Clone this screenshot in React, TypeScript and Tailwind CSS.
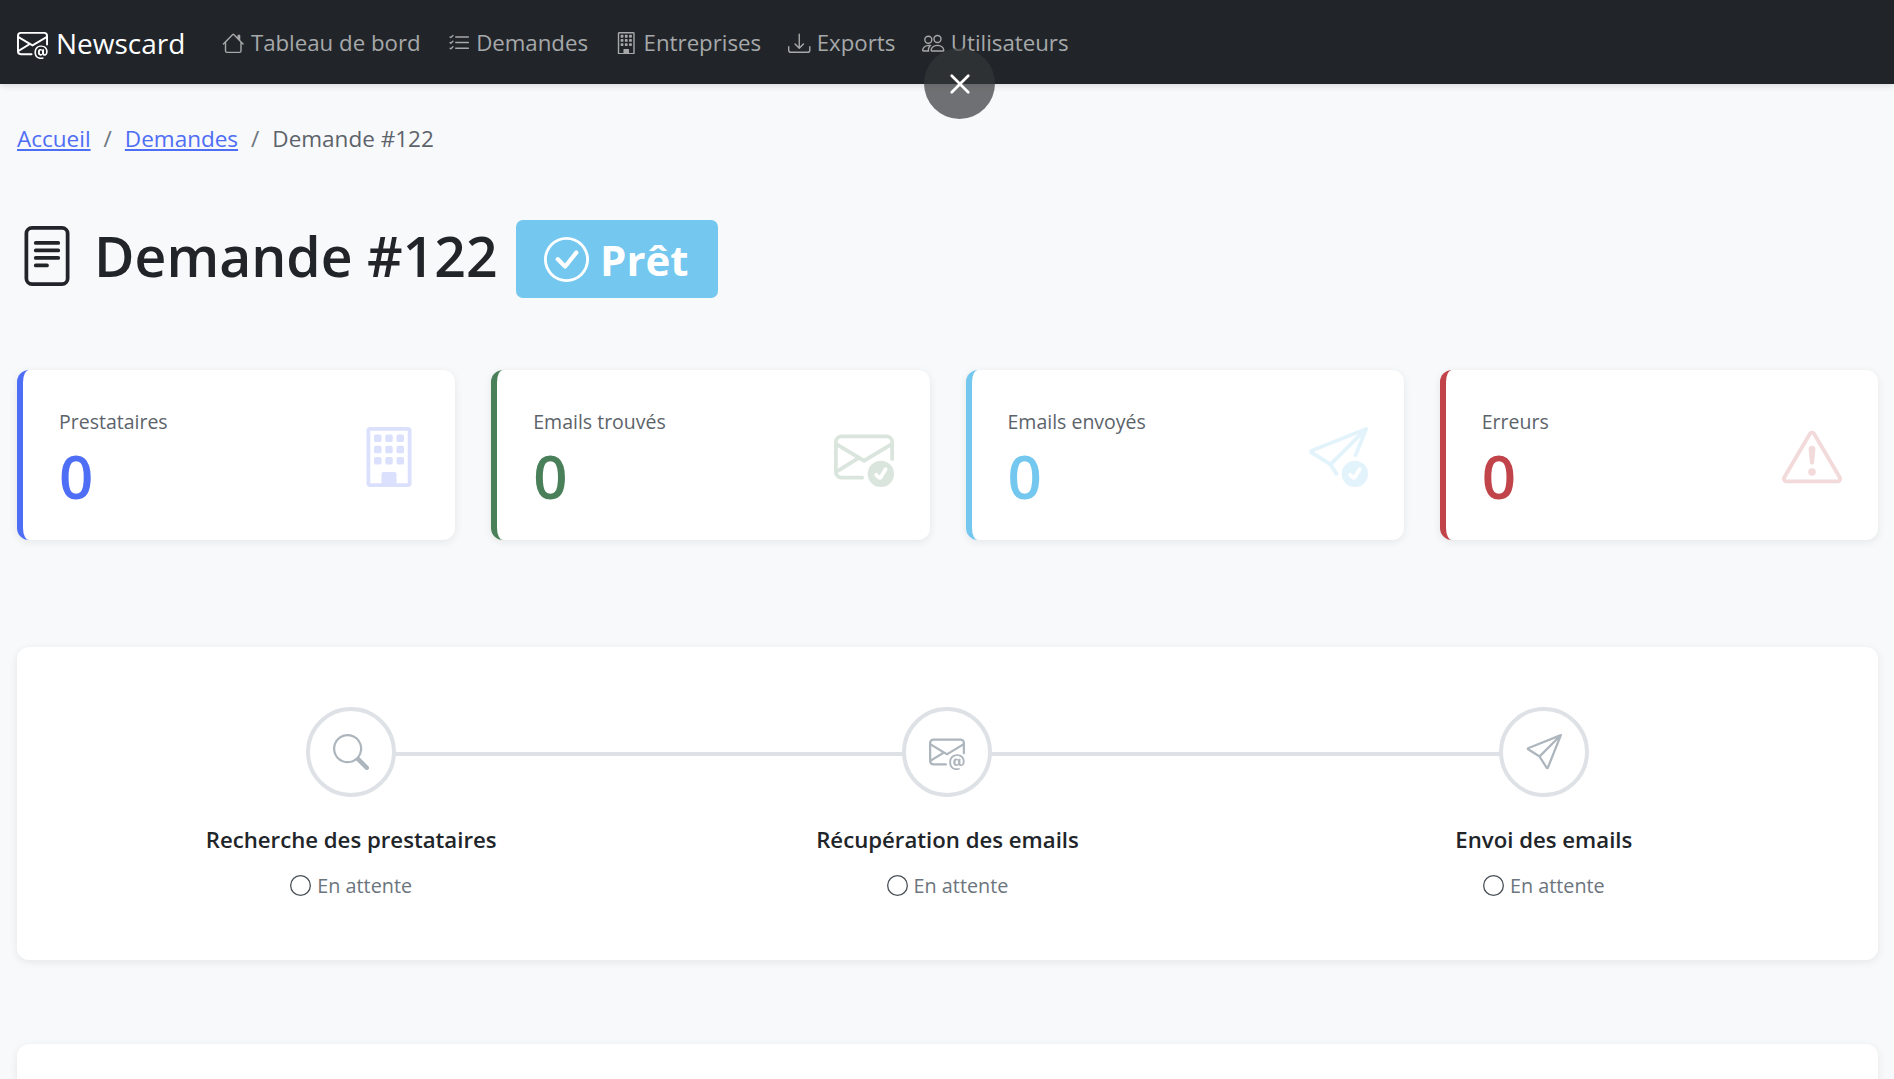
import {
  BsBuilding,
  BsCheckCircle,
  BsCircle,
  BsDownload,
  BsEnvelopeAt,
  BsEnvelopeCheck,
  BsExclamationTriangle,
  BsFileText,
  BsHouse,
  BsListCheck,
  BsPeople,
  BsSearch,
  BsSend,
  BsSendCheck,
  BsX,
} from "react-icons/bs";

const navItems = [
  { label: "Tableau de bord", icon: BsHouse },
  { label: "Demandes", icon: BsListCheck },
  { label: "Entreprises", icon: BsBuilding },
  { label: "Exports", icon: BsDownload },
  { label: "Utilisateurs", icon: BsPeople },
];

const stats = [
  {
    label: "Prestataires",
    icon: BsBuilding,
    border: "border-l-[#4e6ef5]",
    color: "text-[#4e6ef5]",
  },
  {
    label: "Emails trouvés",
    icon: BsEnvelopeCheck,
    border: "border-l-[#4a8059]",
    color: "text-[#4a8059]",
  },
  {
    label: "Emails envoyés",
    icon: BsSendCheck,
    border: "border-l-[#74c7ee]",
    color: "text-[#74c7ee]",
  },
  {
    label: "Erreurs",
    icon: BsExclamationTriangle,
    border: "border-l-[#c0444a]",
    color: "text-[#c0444a]",
  },
];

const steps = [
  { label: "Recherche des prestataires", icon: BsSearch },
  { label: "Récupération des emails", icon: BsEnvelopeAt },
  { label: "Envoi des emails", icon: BsSend },
];

export default function App() {
  return (
    <div className="relative h-[1079px] overflow-hidden bg-[#f8f9fa] font-['Open_Sans',sans-serif] text-[20px] text-[#212529]">
      {/* NAVBAR */}
      <nav className="flex h-[84px] items-center bg-[#212529] pl-[17px] pt-[2px] shadow-[0_2px_6px_rgba(0,0,0,0.12)]">
        <a className="flex items-center gap-[8px] text-[28px] text-white">
          <BsEnvelopeAt size={31} />
          <span>Newscard</span>
        </a>
        <ul className="ml-[37px] flex items-center gap-[27px] text-[22.25px]">
          {navItems.map((item) => (
            <li key={item.label} className="flex items-center gap-[6px] text-[#a6a8a9]">
              <item.icon size={22.5} />
              <span>{item.label}</span>
            </li>
          ))}
        </ul>
      </nav>

      {/* bouton fermer */}
      <button className="absolute left-[924px] top-[48px] flex h-[71px] w-[71px] items-center justify-center rounded-full bg-[rgba(52,54,57,0.7)] text-white">
        <BsX size={44} />
      </button>

      <main className="px-[16px] pl-[17px]">
        {/* BREADCRUMB */}
        <div className="mt-[41px] flex items-center gap-[13px] text-[22.5px] leading-[28px]">
          <a className="text-[#4e6ef5] underline">Accueil</a>
          <span className="text-[#6c757d]">/</span>
          <a className="text-[#4e6ef5] underline">Demandes</a>
          <span className="text-[#6c757d]">/</span>
          <span className="text-[#5c636a]">Demande #122</span>
        </div>

        {/* HEADER */}
        <div className="mt-[67px] flex items-start">
          <BsFileText size={60} className="mt-[6px]" />
          <h1 className="ml-[17px] text-[55.3px] leading-[71px] font-semibold">Demande #122</h1>
          <span className="ml-[18px] flex h-[78px] w-[202px] items-center gap-[11px] rounded-[7px] bg-[#74c7ee] pl-[28.5px] text-[42px] font-bold text-white">
            <BsCheckCircle size={45} />
            <span>Prêt</span>
          </span>
        </div>

        {/* STATS */}
        <div className="mt-[72px] grid grid-cols-4 gap-[36px]">
          {stats.map((stat) => (
            <div
              key={stat.label}
              className={`flex h-[170px] items-center justify-between rounded-[12px] border-l-[6px] bg-white p-[36px] shadow-[0_2px_8px_rgba(0,0,0,0.08)] ${stat.border}`}
            >
              <div className="mt-[9px]">
                <div className="text-[19.5px] leading-[28px] text-[#5c636a]">{stat.label}</div>
                <div className={`mt-[4px] text-[60px] leading-[72px] font-semibold ${stat.color}`}>0</div>
              </div>
              <stat.icon size={60} className={`mt-[4px] opacity-20 ${stat.color}`} />
            </div>
          ))}
        </div>

        {/* ETAPES */}
        <div className="mt-[107px] grid h-[313px] grid-cols-3 rounded-[12px] bg-white px-[36px] pt-[60px] shadow-[0_2px_8px_rgba(0,0,0,0.08)]">
          {steps.map((step, i) => (
            <div key={step.label} className="relative flex flex-col items-center">
              {i < steps.length - 1 && (
                <div className="absolute left-1/2 top-[45px] h-[4px] w-full bg-[#dee2e6]" />
              )}
              <div className="relative flex h-[90px] w-[90px] items-center justify-center rounded-full border-[4px] border-[#dee2e6] bg-white text-[#adb5bd]">
                <step.icon size={36} />
              </div>
              <div className="mt-[28px] text-[22.2px] leading-[30px] font-semibold">{step.label}</div>
              <div className="mt-[16px] flex items-center gap-[6px] text-[19.8px] text-[#6c757d]">
                <BsCircle size={21} className="text-[#495057]" />
                <span>En attente</span>
              </div>
            </div>
          ))}
        </div>

        <div className="mt-[84px] h-[200px] rounded-[12px] bg-white shadow-[0_2px_8px_rgba(0,0,0,0.08)]" />
      </main>
    </div>
  );
}
